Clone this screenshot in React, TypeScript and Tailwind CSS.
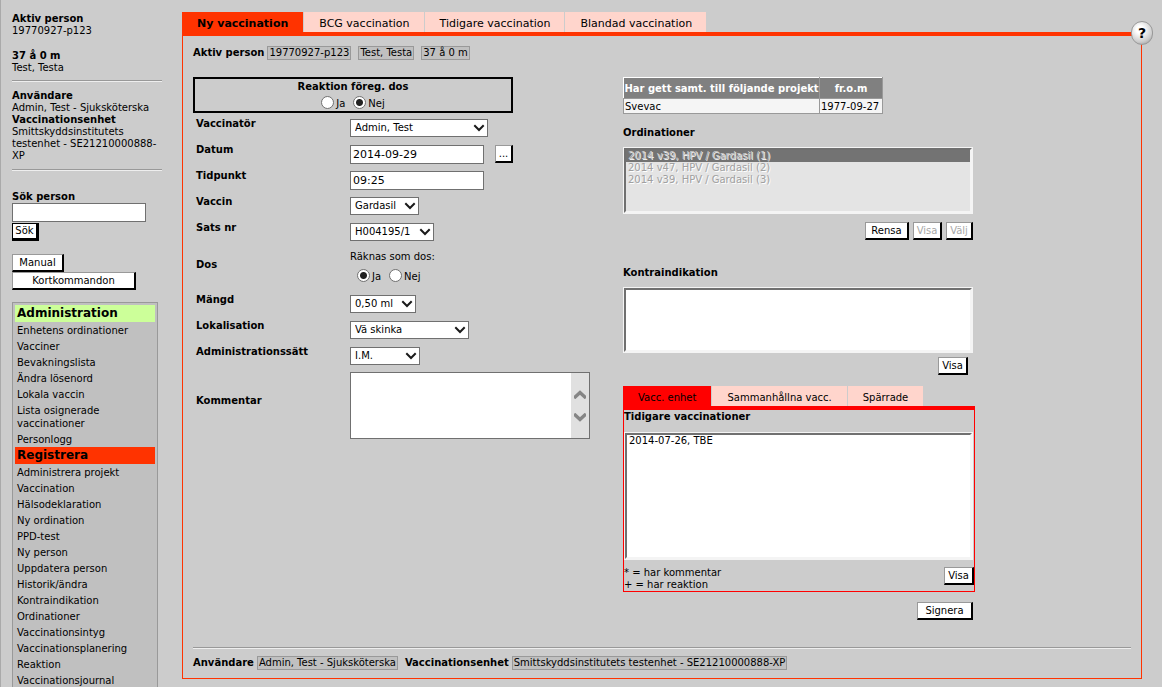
import { useState } from "react";
import type { ReactNode } from "react";
import clsx from "clsx";

type MenuSection = { title: string; tone: string; items: string[] };

const MENU: MenuSection[] = [
  {
    title: "Administration",
    tone: "bg-[#ccff99]",
    items: [
      "Enhetens ordinationer",
      "Vacciner",
      "Bevakningslista",
      "Ändra lösenord",
      "Lokala vaccin",
      "Lista osignerade vaccinationer",
      "Personlogg",
    ],
  },
  {
    title: "Registrera",
    tone: "bg-[#ff3300]",
    items: [
      "Administrera projekt",
      "Vaccination",
      "Hälsodeklaration",
      "Ny ordination",
      "PPD-test",
      "Ny person",
      "Uppdatera person",
      "Historik/ändra",
      "Kontraindikation",
      "Ordinationer",
      "Vaccinationsintyg",
      "Vaccinationsplanering",
      "Reaktion",
      "Vaccinationsjournal",
    ],
  },
];

const TABS = ["Ny vaccination", "BCG vaccination", "Tidigare vaccination", "Blandad vaccination"];
const HISTORY_TABS = ["Vacc. enhet", "Sammanhållna vacc.", "Spärrade"];

const ORDINATIONS = [
  "2014 v39, HPV / Gardasil (1)",
  "2014 v47, HPV / Gardasil (2)",
  "2014 v39, HPV / Gardasil (3)",
];

function Divider({ className }: { className?: string }) {
  return <hr className={clsx("h-[2px] border-0 border-t border-b border-t-[#999] border-b-[#eee]", className)} />;
}

function Button({
  children,
  className,
  disabled,
}: {
  children: ReactNode;
  className?: string;
  disabled?: boolean;
}) {
  return (
    <button
      type="button"
      disabled={disabled}
      className={clsx(
        "h-[18px] whitespace-nowrap border-t border-r-2 border-b-2 border-l border-t-[#999] border-r-black border-b-black border-l-[#999] bg-white pt-px text-center leading-[14px]",
        disabled && "text-[#a8a8a8]",
        className
      )}
    >
      {children}
    </button>
  );
}

function Chip({ children }: { children: ReactNode }) {
  return (
    <span className="h-[14px] whitespace-nowrap border border-[#999] bg-[#c0c0c0] px-px leading-[12px]">
      {children}
    </span>
  );
}

function DropDown({ id, value, className }: { id: string; value: string; className: string }) {
  return (
    <span className={clsx("relative block h-[18px]", className)}>
      <select
        id={id}
        className="block h-full w-full appearance-none border border-[#707070] bg-white pl-1 leading-[16px]"
      >
        <option>{value}</option>
      </select>
      <svg
        className="pointer-events-none absolute top-[5px] right-[3px]"
        width="12"
        height="8"
        viewBox="0 0 12 8"
        fill="none"
        stroke="#1a1a1a"
        strokeWidth="2"
      >
        <path d="M1.300 1.300l4.700 4.700 4.700-4.700" />
      </svg>
    </span>
  );
}

function Radio({ name, label, defaultChecked }: { name: string; label: string; defaultChecked?: boolean }) {
  return (
    <label className="flex h-[14px] items-center gap-[2px]">
      <input
        type="radio"
        name={name}
        defaultChecked={defaultChecked}
        className="size-[13px] appearance-none rounded-full border border-[#707070] bg-white checked:bg-[radial-gradient(circle,#222_3px,#fff_4px)]"
      />
      <span className="pt-[3px] leading-[12px]">{label}</span>
    </label>
  );
}

function Row({ id, label, children }: { id: string; label: string; children: ReactNode }) {
  return (
    <div className="flex h-[26px] items-center">
      <label htmlFor={id} className="w-[154px] self-start pt-[3px] font-bold">
        {label}
      </label>
      {children}
    </div>
  );
}

function ListBox({
  id,
  items,
  selected,
  disabled,
  className,
}: {
  id: string;
  items: string[];
  selected?: string;
  disabled?: boolean;
  className: string;
}) {
  return (
    <div className="border border-[#f4f4f4]">
      <select
        id={id}
        size={5}
        disabled={disabled}
        defaultValue={selected}
        className={clsx(
          "block w-full overflow-hidden border-2 border-t-[#707070] border-r-[#f4f4f4] border-b-[#f4f4f4] border-l-[#707070] opacity-100",
          disabled ? "bg-[#e4e4e4]" : "bg-white",
          className
        )}
      >
        {items.map((item) => (
          <option
            key={item}
            className={clsx(
              "h-[12px] min-h-0 py-0 pr-0 pl-[2px] leading-[14px]",
              disabled &&
                "text-[#a0a0a0] [text-shadow:1px_1px_0_#fff] checked:bg-[linear-gradient(#737373,#737373)] checked:text-[#c8c8c8] checked:[text-shadow:1px_1px_0_#eee]"
            )}
          >
            {item}
          </option>
        ))}
      </select>
    </div>
  );
}

function Sidebar() {
  return (
    <aside className="w-[150px] shrink-0 pt-[13px]">
      <b className="block">Aktiv person</b>
      <p>19770927-p123</p>
      <b className="mt-[13px] block">37 å 0 m</b>
      <p>Test, Testa</p>
      <Divider className="mt-[6px] mb-2" />
      <b className="block">Användare</b>
      <p>Admin, Test - Sjuksköterska</p>
      <b className="block">Vaccinationsenhet</b>
      <p>Smittskyddsinstitutets testenhet - SE21210000888-XP</p>
      <Divider className="mt-[7px]" />
      <label htmlFor="search" className="mt-5 block font-bold">
        Sök person
      </label>
      <input id="search" className="block h-[19px] w-[134px] border border-[#707070] bg-white px-1" />
      <button
        type="button"
        className="mt-px block h-[18px] w-[27px] border border-r-[3px] border-b-[3px] border-black bg-white text-center leading-[14px]"
      >
        Sök
      </button>
      <Button className="mt-[13px] block w-[52px]">Manual</Button>
      <Button className="block w-[124px]">Kortkommandon</Button>
      <nav className="mt-3 w-[146px] border border-[#999] bg-[#c0c0c0] p-[2px] pb-8">
        {MENU.map((section) => (
          <section key={section.title}>
            <h2 className={clsx("h-[17px] pl-[2px] text-[12px] leading-[17px] font-bold", section.tone)}>
              {section.title}
            </h2>
            <ul>
              {section.items.map((item) => (
                <li key={item} className="pt-[2px] pb-px pl-[2px] leading-[13px]">
                  <a href="#">{item}</a>
                </li>
              ))}
            </ul>
          </section>
        ))}
      </nav>
    </aside>
  );
}

function VaccinationForm() {
  return (
    <form className="w-[430px] shrink-0">
      <fieldset className="h-[36px] w-[320px] border-2 border-black">
        <div className="pt-[2px] text-center font-bold">Reaktion föreg. dos</div>
        <div className="flex justify-center gap-2 pt-[2px]">
          <Radio name="reaction" label="Ja" />
          <Radio name="reaction" label="Nej" defaultChecked />
        </div>
      </fieldset>
      <div className="pt-[2px] pl-[3px]">
        <Row id="vaccinator" label="Vaccinatör">
          <DropDown id="vaccinator" value="Admin, Test" className="w-[138px]" />
        </Row>
        <Row id="date" label="Datum">
          <input
            id="date"
            defaultValue="2014-09-29"
            className="h-[19px] w-[134px] border border-[#707070] bg-white px-[2px] text-[11px]"
          />
          <Button className="ml-[11px] w-[18px]">...</Button>
        </Row>
        <Row id="time" label="Tidpunkt">
          <input
            id="time"
            defaultValue="09:25"
            className="h-[19px] w-[134px] border border-[#707070] bg-white px-[2px] text-[11px]"
          />
        </Row>
        <Row id="vaccine" label="Vaccin">
          <DropDown id="vaccine" value="Gardasil" className="w-[69px]" />
        </Row>
        <Row id="batch" label="Sats nr">
          <DropDown id="batch" value="H004195/1" className="w-[84px]" />
        </Row>
        <div className="flex h-[46px]">
          <div className="w-[154px] pt-[14px] font-bold">Dos</div>
          <div className="pt-[6px]">
            <div>Räknas som dos:</div>
            <div className="flex gap-2 pt-[5px] pl-[7px]">
              <Radio name="dose" label="Ja" defaultChecked />
              <Radio name="dose" label="Nej" />
            </div>
          </div>
        </div>
        <Row id="amount" label="Mängd">
          <DropDown id="amount" value="0,50 ml" className="w-[66px]" />
        </Row>
        <Row id="site" label="Lokalisation">
          <DropDown id="site" value="Vä skinka" className="w-[119px]" />
        </Row>
        <Row id="route" label="Administrationssätt">
          <DropDown id="route" value="I.M." className="w-[70px]" />
        </Row>
        <div className="flex items-center pt-[3px]">
          <label htmlFor="comment" className="w-[154px] pb-[10px] font-bold">
            Kommentar
          </label>
          <div className="flex h-[67px] w-[240px] border border-[#707070] bg-white">
            <textarea id="comment" className="flex-1 resize-none overflow-hidden p-1" />
            <div className="flex w-[18px] flex-col items-center justify-center gap-[14px] bg-[#e0e0e0]">
              <svg width="12" height="9" viewBox="0 0 12 9" fill="none" stroke="#858585" strokeWidth="3.500">
                <path d="M0 8l6-5.500 6 5.500" />
              </svg>
              <svg width="12" height="9" viewBox="0 0 12 9" fill="none" stroke="#858585" strokeWidth="3.500">
                <path d="M0 1l6 5.500 6-5.500" />
              </svg>
            </div>
          </div>
        </div>
      </div>
    </form>
  );
}

function History() {
  const [active, setActive] = useState(HISTORY_TABS[0]);

  return (
    <section className="mt-[11px] w-[352px]">
      <div className="flex gap-px">
        {HISTORY_TABS.map((tab) => (
          <button
            key={tab}
            type="button"
            onClick={() => setActive(tab)}
            className={clsx("h-5 px-[15px] pt-1", tab === active ? "bg-[#ff0000]" : "bg-[#ffd5cc]")}
          >
            {tab}
          </button>
        ))}
      </div>
      <div className="border border-t-4 border-[#ff0000]">
        <label htmlFor="history" className="block pt-px font-bold">
          Tidigare vaccinationer
        </label>
        <div className="mt-[9px] pr-px">
          <ListBox id="history" items={["2014-07-26, TBE"]} className="h-[126px]" />
        </div>
        <div className="flex items-start justify-between pt-[7px]">
          <p>
            * = har kommentar
            <br />+ = har reaktion
          </p>
          <Button className="w-[30px]">Visa</Button>
        </div>
      </div>
    </section>
  );
}

function Overview() {
  return (
    <div className="w-[352px] shrink-0">
      <table className="border-collapse border border-[#999] border-t-white border-l-white">
        <thead>
          <tr className="h-[21px] bg-[#808080] text-white">
            <th className="w-[196px] border border-[#999] border-t-white border-l-white p-0 pt-px whitespace-nowrap">
              Har gett samt. till följande projekt
            </th>
            <th className="w-[63px] border border-[#999] border-t-white p-0 pt-px">fr.o.m</th>
          </tr>
        </thead>
        <tbody>
          <tr className="h-[15px] bg-[#f5f5f5]">
            <td className="border border-[#999] p-0 pt-px pl-px">Svevac</td>
            <td className="border border-[#999] p-0 pt-px pl-px">1977-09-27</td>
          </tr>
        </tbody>
      </table>

      <label htmlFor="ordinations" className="mt-[13px] block font-bold">
        Ordinationer
      </label>
      <div className="mt-2 w-[350px]">
        <ListBox id="ordinations" items={ORDINATIONS} selected={ORDINATIONS[0]} disabled className="h-[65px]" />
        <div className="mt-2 flex justify-end gap-1">
          <Button className="w-[44px]">Rensa</Button>
          <Button disabled className="w-[29px]">
            Visa
          </Button>
          <Button disabled className="w-[27px]">
            Välj
          </Button>
        </div>
      </div>

      <label htmlFor="contraindication" className="mt-[27px] block font-bold">
        Kontraindikation
      </label>
      <div className="mt-2 w-[350px]">
        <ListBox id="contraindication" items={[]} className="h-[64px]" />
        <div className="mt-1 flex justify-end pr-[5px]">
          <Button className="w-[30px]">Visa</Button>
        </div>
      </div>

      <History />

      <div className="mt-[10px] flex justify-end pr-[2px]">
        <Button className="w-[56px]">Signera</Button>
      </div>
    </div>
  );
}

export default function App() {
  const [tab, setTab] = useState(TABS[0]);

  return (
    <div className="flex h-screen gap-5 overflow-hidden border-l border-[#aaa] bg-[#cccccc] pr-5 pl-[11px] font-['DejaVu_Sans',Verdana,sans-serif] text-[10px] leading-[12px] text-black">
      <Sidebar />
      <main className="relative min-w-0 flex-1 self-start pt-3">
        <div className="flex gap-px">
          {TABS.map((name) => (
            <button
              key={name}
              type="button"
              onClick={() => setTab(name)}
              className={clsx(
                "h-5 pt-[3px] pl-[15px] text-[11px]",
                name === tab ? "bg-[#ff3300] pr-[15px] font-bold" : "bg-[#ffd5cc] pr-[14px]"
              )}
            >
              {name}
            </button>
          ))}
        </div>
        <button
          type="button"
          aria-label="Hjälp"
          className="absolute top-[21px] right-[-11px] h-6 w-[22px] rounded-full border border-[#999] bg-[radial-gradient(circle_at_40%_35%,#fff_20%,#ccc_65%,#888)] text-[14px] font-bold"
        >
          ?
        </button>
        <div className="border border-t-4 border-[#ff3300] px-[10px] pt-[10px] pb-2">
          <div className="flex items-center">
            <b className="mr-[3px]">Aktiv person</b>
            <div className="flex gap-[7px]">
              <Chip>19770927-p123</Chip>
              <Chip>Test, Testa</Chip>
              <Chip>37 å 0 m</Chip>
            </div>
          </div>
          <div className="mt-[17px] flex">
            <VaccinationForm />
            <Overview />
          </div>
          <Divider className="mt-[27px]" />
          <div className="mt-[7px] flex items-center">
            <b className="mr-[3px]">Användare</b>
            <Chip>Admin, Test - Sjuksköterska</Chip>
            <b className="mr-[3px] ml-[7px]">Vaccinationsenhet</b>
            <Chip>Smittskyddsinstitutets testenhet - SE21210000888-XP</Chip>
          </div>
        </div>
      </main>
    </div>
  );
}
